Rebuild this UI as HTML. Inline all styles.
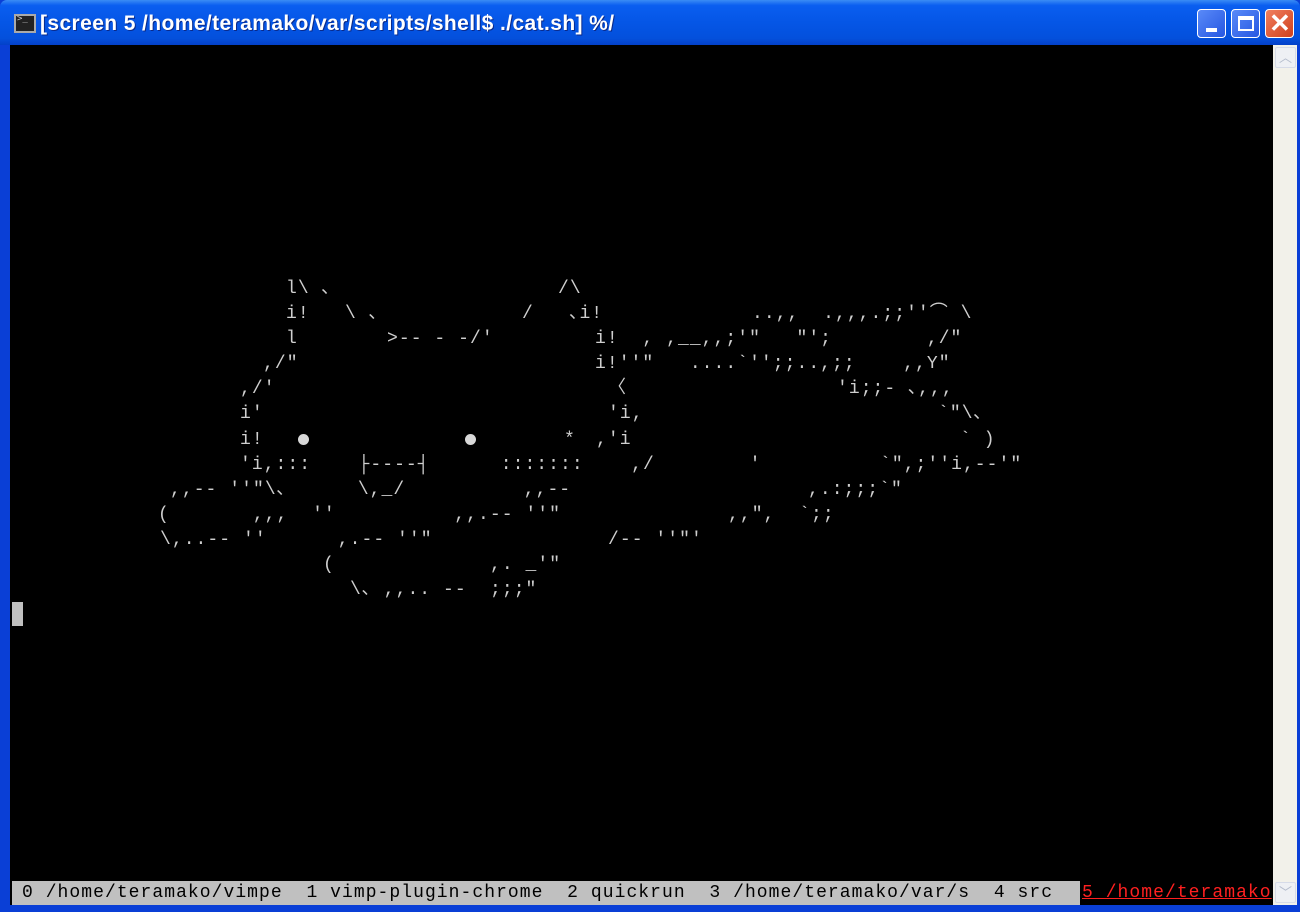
<!DOCTYPE html>
<html><head><meta charset="utf-8"><style>
*{margin:0;padding:0;box-sizing:border-box}
body{width:1300px;height:912px;overflow:hidden;background:#0a3fd6;position:relative;font-family:"Liberation Mono","Noto Sans CJK JP",monospace}
#title{position:absolute;left:0;top:0;width:1300px;height:45px;background:linear-gradient(#3a8cf5 0%,#0a5ef0 12%,#0556e6 50%,#0450dc 85%,#0340c8 100%);border-radius:7px 7px 0 0}
#title .t{position:absolute;left:40px;top:12px;color:#fff;font:bold 21px "Liberation Sans","DejaVu Sans",sans-serif;text-shadow:1px 1px 0 #0a2a8a;letter-spacing:0.4px}
#icon{position:absolute;left:14px;top:14px;width:22px;height:19px;background:#222;border:2px solid #aaa}
#icon:after{content:">_";position:absolute;left:1px;top:-2px;color:#ccc;font:9px monospace}
.btn{position:absolute;top:9px;width:29px;height:29px;border:1px solid #fff;border-radius:4px;background:linear-gradient(135deg,#5a8af8,#2557e2)}
#term{position:absolute;left:10px;top:45px;width:1263px;height:860px;background:#000}
#sb{position:absolute;left:1273px;top:45px;width:24px;height:860px;background:#f2f1ea}
.sbb{position:absolute;left:1275px;width:21px;height:21px;border:1px solid #d6dbe8;border-radius:2px;background:#eef0f4;color:#b4bccc;font:13px sans-serif;text-align:center;line-height:19px}
#bot{position:absolute;left:0;top:905px;width:1300px;height:7px;background:#0a3fd6}
#art{position:absolute;left:0;top:2px;width:1300px;height:700px}
.c{position:absolute;color:#cfcfcf;font-size:18px;letter-spacing:1.05px;white-space:pre;line-height:20px}
.d{position:absolute;width:11px;height:11px;border-radius:50%;background:#d8d8d8}
#status{position:absolute;left:12px;top:881px;width:1068px;height:24px;background:#c0c0c0;color:#000;font-size:18px;letter-spacing:1.05px;white-space:pre;line-height:24px;padding-left:10px}
#red{position:absolute;left:1082px;top:881px;height:24px;color:#ff2020;font-size:18px;letter-spacing:1.05px;white-space:pre;line-height:24px;text-decoration:underline}
#cur{position:absolute;left:12px;top:602px;width:11px;height:24px;background:#c0c0c0}
</style></head><body>
<div id="title"><div id="icon"></div><div class="t">[screen 5 /home/teramako/var/scripts/shell$ ./cat.sh] %/</div>
<div class="btn" style="left:1197px"><div style="position:absolute;left:8px;top:18px;width:11px;height:4px;background:#fff"></div></div>
<div class="btn" style="left:1231px"><div style="position:absolute;left:6px;top:6px;width:16px;height:15px;border:2px solid #fff;border-top-width:4px"></div></div>
<div class="btn" style="left:1265px;background:linear-gradient(135deg,#f08060,#d0401c)"><div style="position:absolute;left:3px;top:-2px;color:#fff;font:bold 26px 'Liberation Sans',sans-serif">✕</div></div>
</div>
<div id="term"></div>
<div id="sb"></div>
<div class="sbb" style="top:47px">︿</div>
<div class="sbb" style="top:882px">﹀</div>
<div id="bot"></div>

<div id="art">
<div class="c" style="left:286px;top:277px">l\ ､</div>
<div class="c" style="left:558px;top:277px">/\</div>

<div class="c" style="left:286px;top:302px">i!</div>
<div class="c" style="left:345px;top:302px">\ ､</div>
<div class="c" style="left:522px;top:302px">/   ､i!</div>
<div class="c" style="left:752px;top:302px">..,,  .,,,.;;''⌒ \</div>

<div class="c" style="left:286px;top:327px">l</div>
<div class="c" style="left:387px;top:327px">&gt;-- - -/'</div>
<div class="c" style="left:595px;top:327px">i!  , ,__,,;'"   "';        ,/"</div>

<div class="c" style="left:263px;top:352px">,/"</div>
<div class="c" style="left:595px;top:352px">i!''"   ....`'';;..,;;    ,,Y"</div>

<div class="c" style="left:240px;top:377px">,/'</div>
<div class="c" style="left:608px;top:377px">〈</div>
<div class="c" style="left:837px;top:377px">'i;;- ､,,,</div>

<div class="c" style="left:240px;top:402px">i'</div>
<div class="c" style="left:608px;top:402px">'i,</div>
<div class="c" style="left:938px;top:402px">`"\､</div>

<div class="c" style="left:240px;top:428px">i!</div>
<div class="d" style="left:298px;top:432px"></div>
<div class="d" style="left:465px;top:432px"></div>
<div class="c" style="left:564px;top:428px">*</div>
<div class="c" style="left:596px;top:428px">,'i</div>
<div class="c" style="left:960px;top:428px">` )</div>

<div class="c" style="left:240px;top:453px">'i,:::    ├----┤      :::::::    ,/        '          `",;''i,--'"</div>

<div class="c" style="left:170px;top:478px">,,-- ''"\､      \,_/          ,,--</div>
<div class="c" style="left:808px;top:478px">,.:;;;`"</div>

<div class="c" style="left:158px;top:503px">(       ,,,  ''          ,,.-- ''"</div>
<div class="c" style="left:728px;top:503px">,,",  `;;</div>

<div class="c" style="left:160px;top:528px">\,..-- ''      ,.-- ''"</div>
<div class="c" style="left:608px;top:528px">/-- ''"'</div>

<div class="c" style="left:323px;top:553px">(</div>
<div class="c" style="left:490px;top:553px">,. _'"</div>

<div class="c" style="left:350px;top:578px">\､ ,,.. --</div>
<div class="c" style="left:490px;top:578px">;;;"</div>
</div>

<div id="cur"></div>
<div id="status">0 /home/teramako/vimpe  1 vimp-plugin-chrome  2 quickrun  3 /home/teramako/var/s  4 src</div>
<div id="red">5 /home/teramako</div>
</body></html>
